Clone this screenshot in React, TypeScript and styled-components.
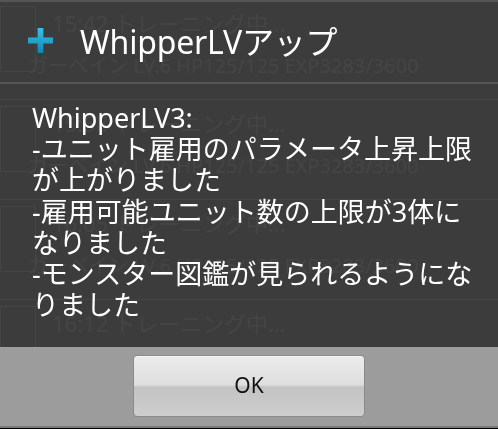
import React from 'react';
import styled, { createGlobalStyle } from 'styled-components';

const GlobalStyle = createGlobalStyle`
	html, body {
		margin: 0;
		padding: 0;
		background: #000;
	}
	body {
		font-family: 'Noto Sans', 'Noto Sans CJK JP', sans-serif;
		overflow: hidden;
	}
`;

/* the list that sits behind the dialog */
const ListPage = styled.main`
	width: 498px;
	height: 429px;
	display: flex;
	flex-direction: column;
	overflow: hidden;
	color: #fff;
`;

const ListRow = styled.section`
	height: 100px;
	flex-shrink: 0;
	display: flex;
	gap: 16px;
	box-sizing: border-box;
	padding-top: 6px;
	border-bottom: 1px solid #fff;
`;

const Thumb = styled.div`
	width: 36px;
	height: 66px;
	border: 1px solid #fff;
	box-sizing: border-box;
`;

const RowText = styled.div`
	display: flex;
	flex-direction: column;
	gap: 12px;
`;

const RowTime = styled.span`
	font-size: 22px;
`;

const RowStats = styled.span`
	font-size: 20px;
	margin-left: -24px;
`;

/* dialog */
const Dialog = styled.div`
	position: fixed;
	inset: 0;
	width: 498px;
	height: 429px;
	display: flex;
	flex-direction: column;
	box-sizing: border-box;
	border-top: 2px solid rgba(88, 88, 88, 0.97);
	padding-bottom: 1px;
`;

const TitleBar = styled.header`
	height: 82px;
	display: flex;
	align-items: center;
	gap: 27px;
	padding: 0 0 4px 28px;
	box-sizing: border-box;
	background: rgba(62, 62, 62, 0.97);
	border-bottom: 2px solid #575757;
`;

const TitleText = styled.h1`
	margin: 0;
	font-size: 32px;
	font-weight: 400;
	color: #fff;
	letter-spacing: -0.2px;
`;

const Body = styled.div`
	flex: 1;
	padding: 18px 20px 0 32px;
	background: rgba(62, 62, 62, 0.97);
	color: #fff;
	font-size: 27px;
	line-height: 31.2px;
`;

const Line = styled.div`
	white-space: nowrap;
`;

const Footer = styled.footer`
	height: 81px;
	display: flex;
	justify-content: center;
	align-items: flex-start;
	padding-top: 8px;
	box-sizing: border-box;
	background: #9c9c9c;
	border-bottom: 2px solid #7a7a7a;
`;

const OkButton = styled.button`
	width: 232px;
	height: 62px;
	border: 1px solid #8a8a8a;
	border-radius: 4px;
	background: linear-gradient(
		to bottom,
		#ececec 0%,
		#dedede 48%,
		#c3c3c3 52%,
		#cdcdcd 100%
	);
	box-shadow: inset 0 1px 0 #f6f6f6;
	font-family: 'Noto Sans', sans-serif;
	font-size: 21px;
	color: #111;
	padding: 0 0 2px 0;
`;

function PlusIcon() {
	return (
		<svg width="25" height="25" viewBox="0 0 26 26">
			<defs>
				<linearGradient id="plusGrad" x1="0" y1="0" x2="0" y2="1">
					<stop offset="0" stopColor="#3cc0e6" />
					<stop offset="1" stopColor="#0c88b2" />
				</linearGradient>
			</defs>
			<path d="M10 0h6v10h10v6H16v10h-6V16H0v-6h10z" fill="url(#plusGrad)" />
		</svg>
	);
}

const rows = [
	{ time: '15:42 トレーニング中...', stats: 'ガーベイン LV.6 HP125/125 EXP3283/3600' },
	{ time: '15:58 トレーニング中...', stats: 'ガーベイン LV.6 HP125/125 EXP3283/3600' },
	{ time: '16:05 トレーニング中...', stats: 'ガーベイン LV.6 HP125/125 EXP3283/3600' },
	{ time: '16:12 トレーニング中...', stats: 'ガーベイン LV.6 HP125/125 EXP3283/3600' },
];

const message = [
	'WhipperLV3:',
	'-ユニット雇用のパラメータ上昇上限',
	'が上がりました',
	'-雇用可能ユニット数の上限が3体に',
	'なりました',
	'-モンスター図鑑が見られるようにな',
	'りました',
];

export default function App() {
	return (
		<>
			<GlobalStyle />
			<ListPage>
				{rows.map((r, i) => (
					<ListRow key={i}>
						<Thumb />
						<RowText>
							<RowTime>{r.time}</RowTime>
							<RowStats>{r.stats}</RowStats>
						</RowText>
					</ListRow>
				))}
			</ListPage>
			<Dialog>
				<TitleBar>
					<PlusIcon />
					<TitleText>WhipperLVアップ</TitleText>
				</TitleBar>
				<Body>
					{message.map((m, i) => (
						<Line key={i}>{m}</Line>
					))}
				</Body>
				<Footer>
					<OkButton>OK</OkButton>
				</Footer>
			</Dialog>
		</>
	);
}
